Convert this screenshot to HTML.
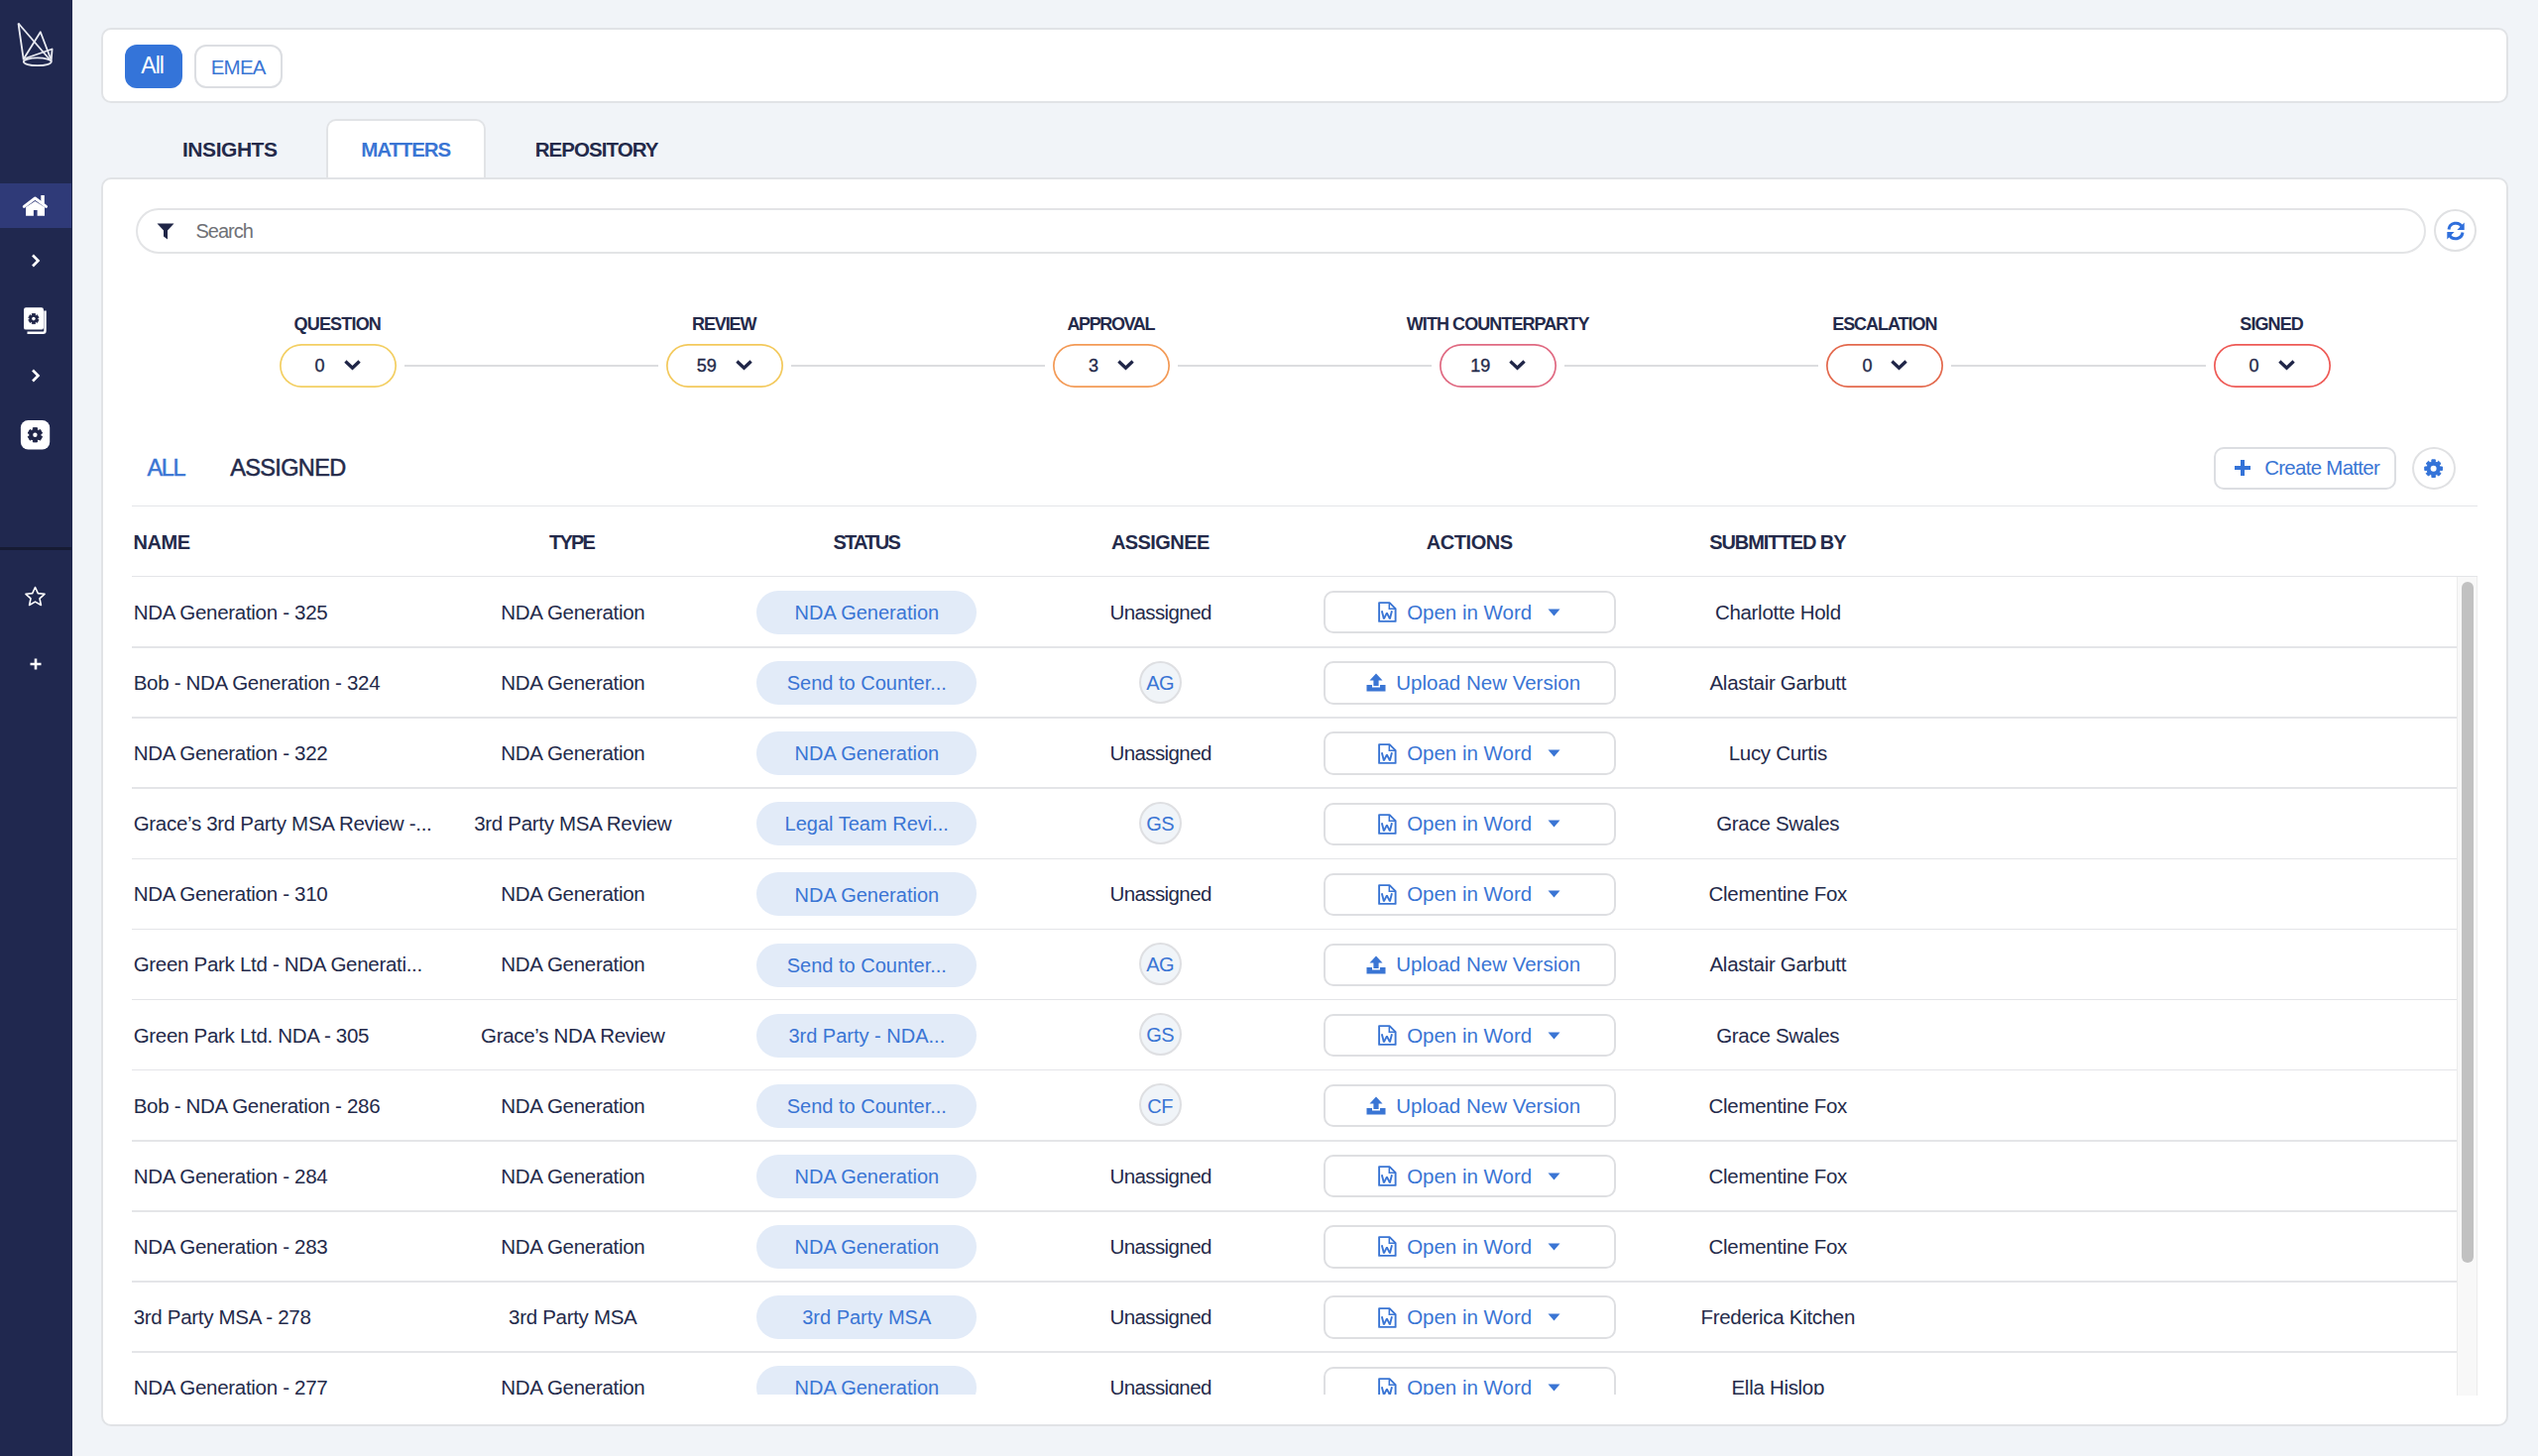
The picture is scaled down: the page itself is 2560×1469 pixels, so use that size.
<!DOCTYPE html>
<html><head><meta charset="utf-8"><title>Matters</title><style>
*{box-sizing:border-box;margin:0;padding:0}
html,body{width:2560px;height:1469px;overflow:hidden;background:#f1f4f8;font-family:"Liberation Sans",sans-serif;color:#242a4a}
.abs{position:absolute}
.t{position:absolute;white-space:nowrap}
#sb{position:absolute;left:0;top:0;width:72.5px;height:1469px;background:#20284f}
#sb .act-home{position:absolute;left:0;top:185px;width:72px;height:45px;background:#2f3a78}
#sb .sep{position:absolute;left:0;top:551.5px;width:72px;height:3px;background:#161b33}
.card{position:absolute;background:#fff;border:2px solid #e1e3e6;border-radius:10px}
.btn{position:absolute;border-radius:12px}
.spill{position:absolute;top:347px;width:118px;height:43.5px;border:none;border-radius:22px;background:#fff;display:flex;align-items:center;justify-content:center;gap:19px}
.spill .sn{font-size:18px;line-height:20px;font-weight:normal;color:#242a4a;-webkit-text-stroke:0.35px #242a4a}
.spill svg{display:block}
.sline{position:absolute;top:368.2px;height:2.2px;background:#dcdddf}
.pill{position:absolute;left:763.4px;width:222px;height:44px;border-radius:22px;background:#e2ebf8}
.av{position:absolute;left:1149.4px;width:43px;height:43px;border-radius:50%;background:#f0f4f8;border:2px solid #dedfe2}
.act{position:absolute;left:1334.7px;width:295px;height:43.4px;border:2px solid #dedfe2;border-radius:10px;display:flex;align-items:center;justify-content:center;color:#3a75d4;font-size:20.5px;white-space:nowrap;background:#fff}
.act .wic{margin-right:10px}
.act .uic{margin-right:10px}
.act .car{margin-left:16px}
.rl{position:absolute;left:133px;width:2344.6px;height:1.6px;background:#e4e5e8}
</style></head>
<body>
<div id="sb">
<svg class="abs" style="left:14px;top:18px" width="44" height="50" viewBox="14 18 44 50">
<g fill="none" stroke="#e9ebf2" stroke-width="1.8" stroke-linejoin="round">
<path d="M18.5 23.5 L23.8 60.5"/>
<path d="M18.5 23.5 L50.5 60.5"/>
<path d="M23.8 59.5 L40.8 32.2 L51 59"/>
<path d="M23.8 59.5 L52.6 49.5 L51.6 62"/>
<ellipse cx="37.8" cy="62.3" rx="14" ry="3.9"/>
</g></svg>
<div class="act-home"></div>
<svg class="abs" style="left:20px;top:194px" width="30" height="26" viewBox="0 0 30 26"><path d="M4.3 14.4 L15.4 6 L26.5 14.4" fill="none" stroke="#2f3a78" stroke-width="5" stroke-linecap="round" stroke-linejoin="round"/><rect x="21.3" y="3" width="3.5" height="8" fill="#fff"/><path d="M4.3 14.4 L15.4 6 L26.5 14.4" fill="none" stroke="#fff" stroke-width="3" stroke-linecap="round" stroke-linejoin="round"/><path d="M6.1 15 L15.4 8.9 L25 15 V23.8 H17.6 V17.9 H13.9 V23.8 H6.1 Z" fill="#fff"/></svg>
<svg class="abs" style="left:31px;top:256px" width="10" height="14" viewBox="0 0 10 14"><path d="M2 1.5 L7.5 7 L2 12.5" fill="none" stroke="#fff" stroke-width="2.6"/></svg>
<svg class="abs" style="left:22px;top:308px" width="28" height="30" viewBox="22 308 28 30">
<path d="M45.5 313.5 V333.8 A2 2 0 0 1 43.5 335.8 H27.5" fill="none" stroke="#fff" stroke-width="2.4"/>
<rect x="24" y="310.2" width="20" height="22.4" rx="2.2" fill="#fff"/>
<path d="M32.41 318.00 L32.26 316.56 L35.54 316.56 L35.39 318.00 L36.27 318.51 L37.45 317.66 L39.08 320.50 L37.77 321.09 L37.77 322.11 L39.08 322.70 L37.45 325.54 L36.27 324.69 L35.39 325.20 L35.54 326.64 L32.26 326.64 L32.41 325.20 L31.53 324.69 L30.35 325.54 L28.72 322.70 L30.03 322.11 L30.03 321.09 L28.72 320.50 L30.35 317.66 L31.53 318.51 Z" fill="#1f2547" stroke="#1f2547" stroke-width="0.8" stroke-linejoin="round"/>
<circle cx="33.9" cy="321.6" r="1.8" fill="#fff"/></svg>
<svg class="abs" style="left:31px;top:372px" width="10" height="14" viewBox="0 0 10 14"><path d="M2 1.5 L7.5 7 L2 12.5" fill="none" stroke="#fff" stroke-width="2.6"/></svg>
<svg class="abs" style="left:20px;top:423px" width="32" height="32" viewBox="20 423 32 32">
<rect x="20.9" y="424.1" width="29.3" height="29.4" rx="7.5" fill="#fff"/>
<path d="M33.43 433.56 L33.30 431.70 L37.50 431.70 L37.37 433.56 L38.95 434.47 L40.49 433.43 L42.60 437.07 L40.93 437.89 L40.93 439.71 L42.60 440.53 L40.49 444.17 L38.95 443.13 L37.37 444.04 L37.50 445.90 L33.30 445.90 L33.43 444.04 L31.85 443.13 L30.31 444.17 L28.20 440.53 L29.87 439.71 L29.87 437.89 L28.20 437.07 L30.31 433.43 L31.85 434.47 Z" fill="#1f2547" stroke="#1f2547" stroke-width="1" stroke-linejoin="round"/>
<circle cx="35.4" cy="438.8" r="2.2" fill="#fff"/></svg>
<div class="sep"></div>
<svg class="abs" style="left:24px;top:591px" width="23" height="22" viewBox="0 0 23 22"><path d="M11.5 1.5 L14.3 7.6 L21 8.3 L16 12.8 L17.4 19.5 L11.5 16.1 L5.6 19.5 L7 12.8 L2 8.3 L8.7 7.6 Z" fill="none" stroke="#fff" stroke-width="1.6" stroke-linejoin="round"/></svg>
<svg class="abs" style="left:30px;top:664px" width="12" height="12" viewBox="0 0 12 12"><path d="M6 0.5 V11.5 M0.5 6 H11.5" stroke="#fff" stroke-width="2.6"/></svg>
</div>

<div class="card" style="left:102.3px;top:28.2px;width:2427.7px;height:76.3px"></div>
<div class="btn" style="left:126px;top:44.6px;width:58px;height:44.4px;background:#3474d9"></div>
<div class="t" style="left:142.3px;top:49.9px;font-size:23px;line-height:32px;font-weight:normal;letter-spacing:-1.00px;color:#fff;">All</div>
<div class="btn" style="left:196px;top:44.8px;width:89px;height:44.2px;border:2px solid #dcdee2;background:#fff"></div>
<div class="t" style="left:212.7px;top:52.5px;font-size:20.5px;line-height:29px;font-weight:normal;letter-spacing:-0.77px;color:#3a75d4;">EMEA</div>

<div class="card" style="left:102.3px;top:178.9px;width:2427.7px;height:1260.4px"></div>
<div class="abs" style="left:329px;top:120.2px;width:161px;height:58.9px;background:#fff;border:2px solid #e1e3e6;border-bottom:none;border-radius:10px 10px 0 0"></div>
<div class="t" style="left:184.0px;top:135.5px;font-size:21px;line-height:29px;font-weight:bold;letter-spacing:-0.46px;color:#242a4a;">INSIGHTS</div>
<div class="t" style="left:364.3px;top:135.7px;font-size:20.5px;line-height:29px;font-weight:bold;letter-spacing:-1.13px;color:#3a75d4;">MATTERS</div>
<div class="t" style="left:539.7px;top:135.7px;font-size:20.5px;line-height:29px;font-weight:bold;letter-spacing:-0.94px;color:#242a4a;">REPOSITORY</div>

<div class="abs" style="left:136.6px;top:209.8px;width:2310px;height:46px;border:2px solid #e3e4e6;border-radius:23px;background:#fff"></div>
<svg class="abs" style="left:158px;top:225px" width="18" height="17" viewBox="0 0 18 17"><path d="M0.5 0.5 H17.5 L11 7.5 V16.5 L7 13.5 V7.5 Z" fill="#1f2547"/></svg>
<div class="t" style="left:197.4px;top:219.1px;font-size:20px;line-height:28px;font-weight:normal;letter-spacing:-0.96px;color:#6f7176;">Search</div>
<div class="abs" style="left:2455.2px;top:211.1px;width:43.3px;height:43.3px;border:2px solid #e0e1e3;border-radius:50%;background:#fff"></div>
<svg class="abs" style="left:2467px;top:223px" width="20" height="20" viewBox="0 0 20 20"><g fill="none" stroke="#2f6fdc" stroke-width="3"><path d="M3 8.5 A7.2 7.2 0 0 1 16.5 6"/><path d="M17 11.5 A7.2 7.2 0 0 1 3.5 14"/></g><path d="M18.7 1.6 V8.9 H11.4 Z" fill="#2f6fdc"/><path d="M1.3 18.4 V11.1 H8.6 Z" fill="#2f6fdc"/></svg>

<div class="t" style="left:296.5px;top:315.3px;font-size:18px;line-height:25px;font-weight:bold;letter-spacing:-0.81px;color:#242a4a;">QUESTION</div><div class="spill" style="left:281.6px;box-shadow:inset 0 0 0 1.7px #f3cf63"><span class="sn">0</span><svg width="17" height="11" viewBox="0 0 17 11"><path d="M2.6 2.6 L8.5 8.3 L14.4 2.6" fill="none" stroke="#1f2547" stroke-width="3.3" stroke-linecap="square"/></svg></div><div class="sline" style="left:407.6px;width:256.2px"></div><div class="t" style="left:698.1px;top:315.3px;font-size:18px;line-height:25px;font-weight:bold;letter-spacing:-1.14px;color:#242a4a;">REVIEW</div><div class="spill" style="left:671.8px;box-shadow:inset 0 0 0 1.7px #f3c95c"><span class="sn">59</span><svg width="17" height="11" viewBox="0 0 17 11"><path d="M2.6 2.6 L8.5 8.3 L14.4 2.6" fill="none" stroke="#1f2547" stroke-width="3.3" stroke-linecap="square"/></svg></div><div class="sline" style="left:797.8px;width:256.2px"></div><div class="t" style="left:1076.5px;top:315.3px;font-size:18px;line-height:25px;font-weight:bold;letter-spacing:-1.39px;color:#242a4a;">APPROVAL</div><div class="spill" style="left:1062.0px;box-shadow:inset 0 0 0 1.7px #f39a56"><span class="sn">3</span><svg width="17" height="11" viewBox="0 0 17 11"><path d="M2.6 2.6 L8.5 8.3 L14.4 2.6" fill="none" stroke="#1f2547" stroke-width="3.3" stroke-linecap="square"/></svg></div><div class="sline" style="left:1188.0px;width:256.2px"></div><div class="t" style="left:1418.8px;top:315.3px;font-size:18px;line-height:25px;font-weight:bold;letter-spacing:-0.94px;color:#242a4a;">WITH COUNTERPARTY</div><div class="spill" style="left:1452.2px;box-shadow:inset 0 0 0 1.7px #e06a82"><span class="sn">19</span><svg width="17" height="11" viewBox="0 0 17 11"><path d="M2.6 2.6 L8.5 8.3 L14.4 2.6" fill="none" stroke="#1f2547" stroke-width="3.3" stroke-linecap="square"/></svg></div><div class="sline" style="left:1578.2px;width:256.2px"></div><div class="t" style="left:1848.2px;top:315.3px;font-size:18px;line-height:25px;font-weight:bold;letter-spacing:-1.04px;color:#242a4a;">ESCALATION</div><div class="spill" style="left:1842.4px;box-shadow:inset 0 0 0 1.7px #e3694d"><span class="sn">0</span><svg width="17" height="11" viewBox="0 0 17 11"><path d="M2.6 2.6 L8.5 8.3 L14.4 2.6" fill="none" stroke="#1f2547" stroke-width="3.3" stroke-linecap="square"/></svg></div><div class="sline" style="left:1968.4px;width:256.2px"></div><div class="t" style="left:2259.3px;top:315.3px;font-size:18px;line-height:25px;font-weight:bold;letter-spacing:-0.90px;color:#242a4a;">SIGNED</div><div class="spill" style="left:2232.6px;box-shadow:inset 0 0 0 1.7px #ee5a56"><span class="sn">0</span><svg width="17" height="11" viewBox="0 0 17 11"><path d="M2.6 2.6 L8.5 8.3 L14.4 2.6" fill="none" stroke="#1f2547" stroke-width="3.3" stroke-linecap="square"/></svg></div>

<div class="t" style="left:148.4px;top:455.5px;font-size:23.5px;line-height:33px;font-weight:normal;letter-spacing:-1.35px;color:#3a75d4;-webkit-text-stroke:0.5px #3a75d4">ALL</div>
<div class="t" style="left:232.2px;top:455.5px;font-size:23.5px;line-height:33px;font-weight:normal;letter-spacing:-0.63px;color:#242a4a;-webkit-text-stroke:0.5px #242a4a">ASSIGNED</div>
<div class="abs" style="left:2233.4px;top:451px;width:184px;height:43.4px;border:2px solid #dcdee2;border-radius:10px;background:#fff"></div>
<svg class="abs" style="left:2254px;top:464px" width="16" height="16" viewBox="0 0 16 16"><path d="M8 0 V16 M0 8 H16" stroke="#3473d8" stroke-width="4"/></svg>
<div class="t" style="left:2284.2px;top:457.8px;font-size:20.4px;line-height:29px;font-weight:normal;letter-spacing:-0.67px;color:#3a75d4;">Create Matter</div>
<div class="abs" style="left:2432.6px;top:451px;width:44px;height:43.4px;border:2px solid #e0e1e3;border-radius:50%;background:#fff"></div>
<svg class="abs" style="left:2440px;top:458px" width="30" height="30" viewBox="2440 458 30 30"><path d="M2452.95 466.10 L2452.84 463.87 L2456.36 463.87 L2456.25 466.10 L2458.10 466.87 L2459.60 465.22 L2462.08 467.70 L2460.43 469.20 L2461.20 471.05 L2463.43 470.94 L2463.43 474.46 L2461.20 474.35 L2460.43 476.20 L2462.08 477.70 L2459.60 480.18 L2458.10 478.53 L2456.25 479.30 L2456.36 481.53 L2452.84 481.53 L2452.95 479.30 L2451.10 478.53 L2449.60 480.18 L2447.12 477.70 L2448.77 476.20 L2448.00 474.35 L2445.77 474.46 L2445.77 470.94 L2448.00 471.05 L2448.77 469.20 L2447.12 467.70 L2449.60 465.22 L2451.10 466.87 Z" fill="#3473d8" stroke="#3473d8" stroke-width="1" stroke-linejoin="round"/><circle cx="2454.6" cy="472.7" r="3" fill="#fff"/></svg>

<div class="abs" style="left:133px;top:509.5px;width:2366px;height:1.6px;background:#e4e5e8"></div>
<div class="t" style="left:134.5px;top:532.8px;font-size:20px;line-height:28px;font-weight:bold;letter-spacing:-0.40px;color:#242a4a;">NAME</div><div class="t" style="left:554.1px;top:532.8px;font-size:20px;line-height:28px;font-weight:bold;letter-spacing:-1.83px;color:#242a4a;">TYPE</div><div class="t" style="left:840.4px;top:532.8px;font-size:20px;line-height:28px;font-weight:bold;letter-spacing:-1.72px;color:#242a4a;">STATUS</div><div class="t" style="left:1121.0px;top:532.8px;font-size:20px;line-height:28px;font-weight:bold;letter-spacing:-0.59px;color:#242a4a;">ASSIGNEE</div><div class="t" style="left:1438.7px;top:532.8px;font-size:20px;line-height:28px;font-weight:bold;letter-spacing:-0.43px;color:#242a4a;">ACTIONS</div><div class="t" style="left:1724.2px;top:532.8px;font-size:20px;line-height:28px;font-weight:bold;letter-spacing:-1.06px;color:#242a4a;">SUBMITTED BY</div>
<div class="abs" style="left:133px;top:580.5px;width:2366px;height:1.6px;background:#e4e5e8"></div>

<div class="abs" style="left:0;top:0;width:2560px;height:1407.2px;overflow:hidden">
<div class="t" style="left:134.7px;top:603.7px;font-size:20.5px;line-height:28px;letter-spacing:-0.3px;color:#242a4a">NDA Generation - 325</div><div class="t" style="left:505.3px;top:603.7px;font-size:20.5px;line-height:28px;letter-spacing:-0.3px;color:#242a4a">NDA Generation</div><div class="pill" style="top:595.9px"></div><div class="t" style="left:801.5px;top:604.0px;font-size:20px;line-height:28px;letter-spacing:0px;color:#3a75d4">NDA Generation</div><div class="t" style="left:1119.5px;top:603.7px;font-size:20.5px;line-height:28px;letter-spacing:-0.6px;color:#242a4a">Unassigned</div><div class="act" style="top:596.1px;padding-left:0px"><svg class="wic" width="19" height="21" viewBox="0 0 19 21"><path d="M1.1 1.1 H11.6 L17.6 7.1 V19.9 H1.1 Z" fill="none" stroke="currentColor" stroke-width="1.9" stroke-linejoin="round"/><path d="M11.3 1.1 V7.2 H17.6" fill="none" stroke="currentColor" stroke-width="1.5"/><path d="M3.8 9.2 L5.9 17.4 L8.9 11.4 L11.9 17.4 L14 9.2" fill="none" stroke="currentColor" stroke-width="1.9" stroke-linejoin="bevel"/></svg><span class="at">Open in Word</span><svg class="car" width="13" height="8" viewBox="0 0 13 8"><path d="M0.5 0.5 H12.5 L6.5 7.5 Z" fill="currentColor"/></svg></div><div class="t" style="left:1729.9px;top:603.7px;font-size:20.5px;line-height:28px;letter-spacing:-0.3px;color:#242a4a">Charlotte Hold</div><div class="rl" style="top:652.1px"></div><div class="t" style="left:134.7px;top:674.8px;font-size:20.5px;line-height:28px;letter-spacing:-0.3px;color:#242a4a">Bob - NDA Generation - 324</div><div class="t" style="left:505.3px;top:674.8px;font-size:20.5px;line-height:28px;letter-spacing:-0.3px;color:#242a4a">NDA Generation</div><div class="pill" style="top:667.0px"></div><div class="t" style="left:793.7px;top:675.1px;font-size:20px;line-height:28px;letter-spacing:0px;color:#3a75d4">Send to Counter...</div><div class="av" style="top:666.5px"></div><div class="t" style="left:1156.2px;top:674.7px;font-size:20px;line-height:28px;letter-spacing:-0.5px;color:#3a75d4">AG</div><div class="act" style="top:667.2px;padding-left:8px"><svg class="uic" width="20" height="19" viewBox="0 0 20 19"><path d="M10 0.5 L16.5 7.5 H12.6 V13 H7.4 V7.5 H3.5 Z" fill="currentColor"/><path d="M0.5 12 H6 V14.5 H14 V12 H19.5 V18.5 H0.5 Z" fill="currentColor"/></svg><span class="at">Upload New Version</span></div><div class="t" style="left:1724.5px;top:674.8px;font-size:20.5px;line-height:28px;letter-spacing:-0.3px;color:#242a4a">Alastair Garbutt</div><div class="rl" style="top:723.3px"></div><div class="t" style="left:134.7px;top:746.0px;font-size:20.5px;line-height:28px;letter-spacing:-0.3px;color:#242a4a">NDA Generation - 322</div><div class="t" style="left:505.3px;top:746.0px;font-size:20.5px;line-height:28px;letter-spacing:-0.3px;color:#242a4a">NDA Generation</div><div class="pill" style="top:738.2px"></div><div class="t" style="left:801.5px;top:746.2px;font-size:20px;line-height:28px;letter-spacing:0px;color:#3a75d4">NDA Generation</div><div class="t" style="left:1119.5px;top:746.0px;font-size:20.5px;line-height:28px;letter-spacing:-0.6px;color:#242a4a">Unassigned</div><div class="act" style="top:738.4px;padding-left:0px"><svg class="wic" width="19" height="21" viewBox="0 0 19 21"><path d="M1.1 1.1 H11.6 L17.6 7.1 V19.9 H1.1 Z" fill="none" stroke="currentColor" stroke-width="1.9" stroke-linejoin="round"/><path d="M11.3 1.1 V7.2 H17.6" fill="none" stroke="currentColor" stroke-width="1.5"/><path d="M3.8 9.2 L5.9 17.4 L8.9 11.4 L11.9 17.4 L14 9.2" fill="none" stroke="currentColor" stroke-width="1.9" stroke-linejoin="bevel"/></svg><span class="at">Open in Word</span><svg class="car" width="13" height="8" viewBox="0 0 13 8"><path d="M0.5 0.5 H12.5 L6.5 7.5 Z" fill="currentColor"/></svg></div><div class="t" style="left:1743.7px;top:746.0px;font-size:20.5px;line-height:28px;letter-spacing:-0.3px;color:#242a4a">Lucy Curtis</div><div class="rl" style="top:794.4px"></div><div class="t" style="left:134.7px;top:817.1px;font-size:20.5px;line-height:28px;letter-spacing:-0.3px;color:#242a4a">Grace’s 3rd Party MSA Review -...</div><div class="t" style="left:478.2px;top:817.1px;font-size:20.5px;line-height:28px;letter-spacing:-0.3px;color:#242a4a">3rd Party MSA Review</div><div class="pill" style="top:809.3px"></div><div class="t" style="left:791.6px;top:817.4px;font-size:20px;line-height:28px;letter-spacing:0px;color:#3a75d4">Legal Team Revi...</div><div class="av" style="top:808.8px"></div><div class="t" style="left:1156.2px;top:817.0px;font-size:20px;line-height:28px;letter-spacing:-0.5px;color:#3a75d4">GS</div><div class="act" style="top:809.5px;padding-left:0px"><svg class="wic" width="19" height="21" viewBox="0 0 19 21"><path d="M1.1 1.1 H11.6 L17.6 7.1 V19.9 H1.1 Z" fill="none" stroke="currentColor" stroke-width="1.9" stroke-linejoin="round"/><path d="M11.3 1.1 V7.2 H17.6" fill="none" stroke="currentColor" stroke-width="1.5"/><path d="M3.8 9.2 L5.9 17.4 L8.9 11.4 L11.9 17.4 L14 9.2" fill="none" stroke="currentColor" stroke-width="1.9" stroke-linejoin="bevel"/></svg><span class="at">Open in Word</span><svg class="car" width="13" height="8" viewBox="0 0 13 8"><path d="M0.5 0.5 H12.5 L6.5 7.5 Z" fill="currentColor"/></svg></div><div class="t" style="left:1731.2px;top:817.1px;font-size:20.5px;line-height:28px;letter-spacing:-0.3px;color:#242a4a">Grace Swales</div><div class="rl" style="top:865.5px"></div><div class="t" style="left:134.7px;top:888.2px;font-size:20.5px;line-height:28px;letter-spacing:-0.3px;color:#242a4a">NDA Generation - 310</div><div class="t" style="left:505.3px;top:888.2px;font-size:20.5px;line-height:28px;letter-spacing:-0.3px;color:#242a4a">NDA Generation</div><div class="pill" style="top:880.4px"></div><div class="t" style="left:801.5px;top:888.5px;font-size:20px;line-height:28px;letter-spacing:0px;color:#3a75d4">NDA Generation</div><div class="t" style="left:1119.5px;top:888.2px;font-size:20.5px;line-height:28px;letter-spacing:-0.6px;color:#242a4a">Unassigned</div><div class="act" style="top:880.6px;padding-left:0px"><svg class="wic" width="19" height="21" viewBox="0 0 19 21"><path d="M1.1 1.1 H11.6 L17.6 7.1 V19.9 H1.1 Z" fill="none" stroke="currentColor" stroke-width="1.9" stroke-linejoin="round"/><path d="M11.3 1.1 V7.2 H17.6" fill="none" stroke="currentColor" stroke-width="1.5"/><path d="M3.8 9.2 L5.9 17.4 L8.9 11.4 L11.9 17.4 L14 9.2" fill="none" stroke="currentColor" stroke-width="1.9" stroke-linejoin="bevel"/></svg><span class="at">Open in Word</span><svg class="car" width="13" height="8" viewBox="0 0 13 8"><path d="M0.5 0.5 H12.5 L6.5 7.5 Z" fill="currentColor"/></svg></div><div class="t" style="left:1723.6px;top:888.2px;font-size:20.5px;line-height:28px;letter-spacing:-0.3px;color:#242a4a">Clementine Fox</div><div class="rl" style="top:936.6px"></div><div class="t" style="left:134.7px;top:959.3px;font-size:20.5px;line-height:28px;letter-spacing:-0.3px;color:#242a4a">Green Park Ltd - NDA Generati...</div><div class="t" style="left:505.3px;top:959.3px;font-size:20.5px;line-height:28px;letter-spacing:-0.3px;color:#242a4a">NDA Generation</div><div class="pill" style="top:951.5px"></div><div class="t" style="left:793.7px;top:959.6px;font-size:20px;line-height:28px;letter-spacing:0px;color:#3a75d4">Send to Counter...</div><div class="av" style="top:951.0px"></div><div class="t" style="left:1156.2px;top:959.2px;font-size:20px;line-height:28px;letter-spacing:-0.5px;color:#3a75d4">AG</div><div class="act" style="top:951.7px;padding-left:8px"><svg class="uic" width="20" height="19" viewBox="0 0 20 19"><path d="M10 0.5 L16.5 7.5 H12.6 V13 H7.4 V7.5 H3.5 Z" fill="currentColor"/><path d="M0.5 12 H6 V14.5 H14 V12 H19.5 V18.5 H0.5 Z" fill="currentColor"/></svg><span class="at">Upload New Version</span></div><div class="t" style="left:1724.5px;top:959.3px;font-size:20.5px;line-height:28px;letter-spacing:-0.3px;color:#242a4a">Alastair Garbutt</div><div class="rl" style="top:1007.8px"></div><div class="t" style="left:134.7px;top:1030.5px;font-size:20.5px;line-height:28px;letter-spacing:-0.3px;color:#242a4a">Green Park Ltd. NDA - 305</div><div class="t" style="left:485.0px;top:1030.5px;font-size:20.5px;line-height:28px;letter-spacing:-0.3px;color:#242a4a">Grace’s NDA Review</div><div class="pill" style="top:1022.7px"></div><div class="t" style="left:795.4px;top:1030.7px;font-size:20px;line-height:28px;letter-spacing:0px;color:#3a75d4">3rd Party - NDA...</div><div class="av" style="top:1022.2px"></div><div class="t" style="left:1156.2px;top:1030.3px;font-size:20px;line-height:28px;letter-spacing:-0.5px;color:#3a75d4">GS</div><div class="act" style="top:1022.9px;padding-left:0px"><svg class="wic" width="19" height="21" viewBox="0 0 19 21"><path d="M1.1 1.1 H11.6 L17.6 7.1 V19.9 H1.1 Z" fill="none" stroke="currentColor" stroke-width="1.9" stroke-linejoin="round"/><path d="M11.3 1.1 V7.2 H17.6" fill="none" stroke="currentColor" stroke-width="1.5"/><path d="M3.8 9.2 L5.9 17.4 L8.9 11.4 L11.9 17.4 L14 9.2" fill="none" stroke="currentColor" stroke-width="1.9" stroke-linejoin="bevel"/></svg><span class="at">Open in Word</span><svg class="car" width="13" height="8" viewBox="0 0 13 8"><path d="M0.5 0.5 H12.5 L6.5 7.5 Z" fill="currentColor"/></svg></div><div class="t" style="left:1731.2px;top:1030.5px;font-size:20.5px;line-height:28px;letter-spacing:-0.3px;color:#242a4a">Grace Swales</div><div class="rl" style="top:1078.9px"></div><div class="t" style="left:134.7px;top:1101.6px;font-size:20.5px;line-height:28px;letter-spacing:-0.3px;color:#242a4a">Bob - NDA Generation - 286</div><div class="t" style="left:505.3px;top:1101.6px;font-size:20.5px;line-height:28px;letter-spacing:-0.3px;color:#242a4a">NDA Generation</div><div class="pill" style="top:1093.8px"></div><div class="t" style="left:793.7px;top:1101.9px;font-size:20px;line-height:28px;letter-spacing:0px;color:#3a75d4">Send to Counter...</div><div class="av" style="top:1093.3px"></div><div class="t" style="left:1157.3px;top:1101.5px;font-size:20px;line-height:28px;letter-spacing:-0.5px;color:#3a75d4">CF</div><div class="act" style="top:1094.0px;padding-left:8px"><svg class="uic" width="20" height="19" viewBox="0 0 20 19"><path d="M10 0.5 L16.5 7.5 H12.6 V13 H7.4 V7.5 H3.5 Z" fill="currentColor"/><path d="M0.5 12 H6 V14.5 H14 V12 H19.5 V18.5 H0.5 Z" fill="currentColor"/></svg><span class="at">Upload New Version</span></div><div class="t" style="left:1723.6px;top:1101.6px;font-size:20.5px;line-height:28px;letter-spacing:-0.3px;color:#242a4a">Clementine Fox</div><div class="rl" style="top:1150.0px"></div><div class="t" style="left:134.7px;top:1172.7px;font-size:20.5px;line-height:28px;letter-spacing:-0.3px;color:#242a4a">NDA Generation - 284</div><div class="t" style="left:505.3px;top:1172.7px;font-size:20.5px;line-height:28px;letter-spacing:-0.3px;color:#242a4a">NDA Generation</div><div class="pill" style="top:1164.9px"></div><div class="t" style="left:801.5px;top:1173.0px;font-size:20px;line-height:28px;letter-spacing:0px;color:#3a75d4">NDA Generation</div><div class="t" style="left:1119.5px;top:1172.7px;font-size:20.5px;line-height:28px;letter-spacing:-0.6px;color:#242a4a">Unassigned</div><div class="act" style="top:1165.1px;padding-left:0px"><svg class="wic" width="19" height="21" viewBox="0 0 19 21"><path d="M1.1 1.1 H11.6 L17.6 7.1 V19.9 H1.1 Z" fill="none" stroke="currentColor" stroke-width="1.9" stroke-linejoin="round"/><path d="M11.3 1.1 V7.2 H17.6" fill="none" stroke="currentColor" stroke-width="1.5"/><path d="M3.8 9.2 L5.9 17.4 L8.9 11.4 L11.9 17.4 L14 9.2" fill="none" stroke="currentColor" stroke-width="1.9" stroke-linejoin="bevel"/></svg><span class="at">Open in Word</span><svg class="car" width="13" height="8" viewBox="0 0 13 8"><path d="M0.5 0.5 H12.5 L6.5 7.5 Z" fill="currentColor"/></svg></div><div class="t" style="left:1723.6px;top:1172.7px;font-size:20.5px;line-height:28px;letter-spacing:-0.3px;color:#242a4a">Clementine Fox</div><div class="rl" style="top:1221.2px"></div><div class="t" style="left:134.7px;top:1243.9px;font-size:20.5px;line-height:28px;letter-spacing:-0.3px;color:#242a4a">NDA Generation - 283</div><div class="t" style="left:505.3px;top:1243.9px;font-size:20.5px;line-height:28px;letter-spacing:-0.3px;color:#242a4a">NDA Generation</div><div class="pill" style="top:1236.1px"></div><div class="t" style="left:801.5px;top:1244.1px;font-size:20px;line-height:28px;letter-spacing:0px;color:#3a75d4">NDA Generation</div><div class="t" style="left:1119.5px;top:1243.9px;font-size:20.5px;line-height:28px;letter-spacing:-0.6px;color:#242a4a">Unassigned</div><div class="act" style="top:1236.3px;padding-left:0px"><svg class="wic" width="19" height="21" viewBox="0 0 19 21"><path d="M1.1 1.1 H11.6 L17.6 7.1 V19.9 H1.1 Z" fill="none" stroke="currentColor" stroke-width="1.9" stroke-linejoin="round"/><path d="M11.3 1.1 V7.2 H17.6" fill="none" stroke="currentColor" stroke-width="1.5"/><path d="M3.8 9.2 L5.9 17.4 L8.9 11.4 L11.9 17.4 L14 9.2" fill="none" stroke="currentColor" stroke-width="1.9" stroke-linejoin="bevel"/></svg><span class="at">Open in Word</span><svg class="car" width="13" height="8" viewBox="0 0 13 8"><path d="M0.5 0.5 H12.5 L6.5 7.5 Z" fill="currentColor"/></svg></div><div class="t" style="left:1723.6px;top:1243.9px;font-size:20.5px;line-height:28px;letter-spacing:-0.3px;color:#242a4a">Clementine Fox</div><div class="rl" style="top:1292.3px"></div><div class="t" style="left:134.7px;top:1315.0px;font-size:20.5px;line-height:28px;letter-spacing:-0.3px;color:#242a4a">3rd Party MSA - 278</div><div class="t" style="left:513.1px;top:1315.0px;font-size:20.5px;line-height:28px;letter-spacing:-0.3px;color:#242a4a">3rd Party MSA</div><div class="pill" style="top:1307.2px"></div><div class="t" style="left:809.2px;top:1315.3px;font-size:20px;line-height:28px;letter-spacing:0px;color:#3a75d4">3rd Party MSA</div><div class="t" style="left:1119.5px;top:1315.0px;font-size:20.5px;line-height:28px;letter-spacing:-0.6px;color:#242a4a">Unassigned</div><div class="act" style="top:1307.4px;padding-left:0px"><svg class="wic" width="19" height="21" viewBox="0 0 19 21"><path d="M1.1 1.1 H11.6 L17.6 7.1 V19.9 H1.1 Z" fill="none" stroke="currentColor" stroke-width="1.9" stroke-linejoin="round"/><path d="M11.3 1.1 V7.2 H17.6" fill="none" stroke="currentColor" stroke-width="1.5"/><path d="M3.8 9.2 L5.9 17.4 L8.9 11.4 L11.9 17.4 L14 9.2" fill="none" stroke="currentColor" stroke-width="1.9" stroke-linejoin="bevel"/></svg><span class="at">Open in Word</span><svg class="car" width="13" height="8" viewBox="0 0 13 8"><path d="M0.5 0.5 H12.5 L6.5 7.5 Z" fill="currentColor"/></svg></div><div class="t" style="left:1715.5px;top:1315.0px;font-size:20.5px;line-height:28px;letter-spacing:-0.3px;color:#242a4a">Frederica Kitchen</div><div class="rl" style="top:1363.4px"></div><div class="t" style="left:134.7px;top:1386.1px;font-size:20.5px;line-height:28px;letter-spacing:-0.3px;color:#242a4a">NDA Generation - 277</div><div class="t" style="left:505.3px;top:1386.1px;font-size:20.5px;line-height:28px;letter-spacing:-0.3px;color:#242a4a">NDA Generation</div><div class="pill" style="top:1378.3px"></div><div class="t" style="left:801.5px;top:1386.4px;font-size:20px;line-height:28px;letter-spacing:0px;color:#3a75d4">NDA Generation</div><div class="t" style="left:1119.5px;top:1386.1px;font-size:20.5px;line-height:28px;letter-spacing:-0.6px;color:#242a4a">Unassigned</div><div class="act" style="top:1378.5px;padding-left:0px"><svg class="wic" width="19" height="21" viewBox="0 0 19 21"><path d="M1.1 1.1 H11.6 L17.6 7.1 V19.9 H1.1 Z" fill="none" stroke="currentColor" stroke-width="1.9" stroke-linejoin="round"/><path d="M11.3 1.1 V7.2 H17.6" fill="none" stroke="currentColor" stroke-width="1.5"/><path d="M3.8 9.2 L5.9 17.4 L8.9 11.4 L11.9 17.4 L14 9.2" fill="none" stroke="currentColor" stroke-width="1.9" stroke-linejoin="bevel"/></svg><span class="at">Open in Word</span><svg class="car" width="13" height="8" viewBox="0 0 13 8"><path d="M0.5 0.5 H12.5 L6.5 7.5 Z" fill="currentColor"/></svg></div><div class="t" style="left:1746.5px;top:1386.1px;font-size:20.5px;line-height:28px;letter-spacing:-0.3px;color:#242a4a">Ella Hislop</div><div class="rl" style="top:1434.6px"></div>
</div>
<div class="abs" style="left:2477.6px;top:582px;width:21px;height:826px;background:#f8f8f8;border-left:1px solid #ececec;border-right:1px solid #ececec"></div>
<div class="abs" style="left:2483px;top:587px;width:11.7px;height:686.6px;border-radius:6px;background:#c1c1c1"></div>
</body></html>
